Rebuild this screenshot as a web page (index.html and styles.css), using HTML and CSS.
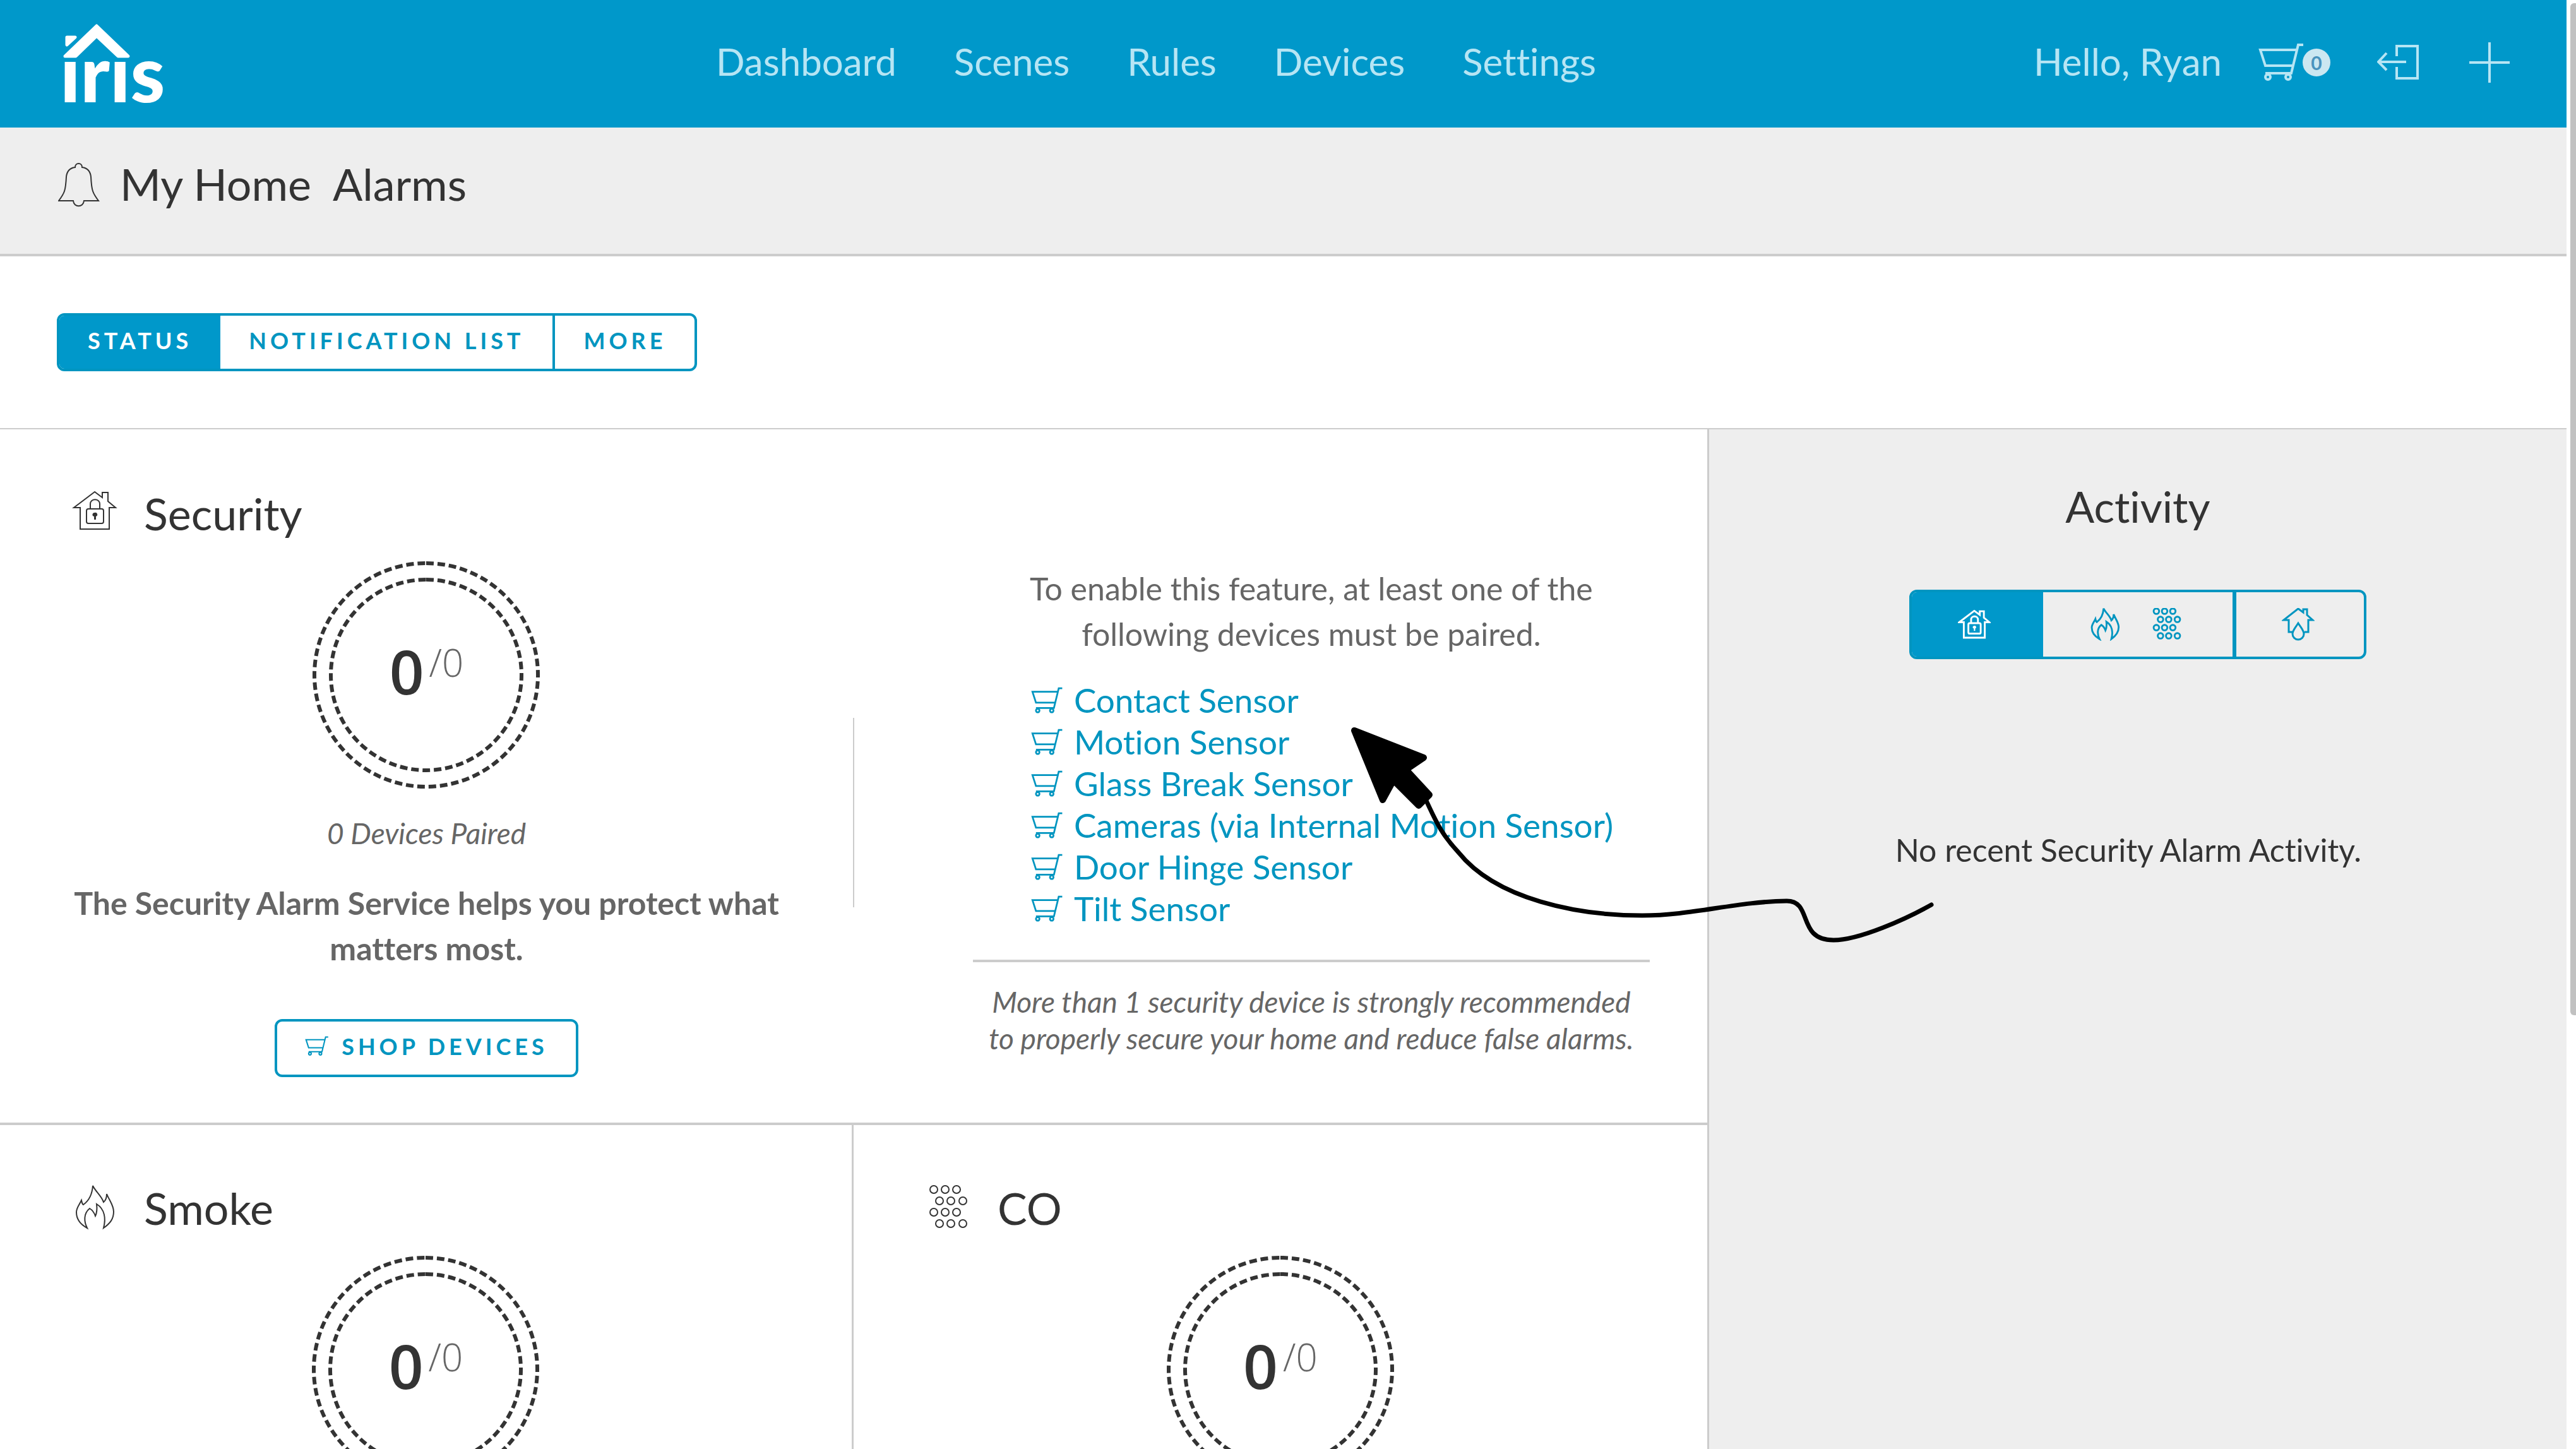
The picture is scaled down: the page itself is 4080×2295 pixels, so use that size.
FILE: index.html
```html
<!DOCTYPE html>
<html lang="en">
<head>
<meta charset="utf-8">
<title>Iris - My Home Alarms</title>
<link rel="stylesheet" href="styles.css">
</head>
<body>
<svg class="defs" aria-hidden="true">
  <symbol id="cart" viewBox="-2 0 73 62">
    <path d="M69 3H61L50 48H9M58 11H1L9 36H52"/>
    <circle cx="13" cy="54" r="4"/><circle cx="45" cy="54" r="4"/>
  </symbol>
  <symbol id="house-lock" viewBox="-2 -1 72 72">
    <path d="M34 1L1 26H11V60H57V26H67L55 16V2H46V10Z"/>
    <rect x="21" y="28" width="27" height="23" rx="3"/>
    <path d="M27 28V20C27 11 42 11 42 20V28"/>
    <path class="solid" d="M34 34A3 3 0 0 1 36 40V45H33V40A3 3 0 0 1 34 34Z"/>
  </symbol>
  <symbol id="flame" viewBox="-6 0 72 72">
    <path d="M27 1C31 10 41 17 44 27C48 24 49 19 49 14C53 24 60 32 60 42C60 54 54 61 44 68C48 53 46 38 33 30C34 38 34 43 31 49C29 43 27 40 22 37C12 45 13 58 18 68C7 62 1 54 1 43C1 36 6 31 9 24C10 28 10 30 12 31C22 24 26 14 27 1Z"/>
  </symbol>
  <symbol id="dots" viewBox="-5 0 72 72">
    <circle cx="8" cy="7" r="6"/><circle cx="26" cy="7" r="6"/><circle cx="44" cy="7" r="6"/>
    <circle cx="17" cy="25" r="6"/><circle cx="35" cy="25" r="6"/><circle cx="54" cy="25" r="6"/>
    <circle cx="8" cy="43" r="6"/><circle cx="26" cy="43" r="6"/><circle cx="44" cy="43" r="6"/>
    <circle cx="17" cy="61" r="6"/><circle cx="35" cy="61" r="6"/><circle cx="54" cy="61" r="6"/>
  </symbol>
  <symbol id="house-drop" viewBox="-1 0 52 52">
    <path d="M16 38H10V19H2L25 1L33 7V2H39V11L48 19H41V38H35M25 24C20 32 16 36 16 41A9 9 0 0 0 34 41C34 36 30 32 25 24Z"/>
  </symbol>
  <symbol id="rings" viewBox="0 0 360 360">
    <g transform="rotate(-90 180 180)" stroke-dasharray="12 6">
      <circle cx="180" cy="180" r="177"/><circle cx="180" cy="180" r="151"/>
    </g>
  </symbol>
</svg>

<div class="window">
  <div class="page">
    <header class="topbar">
      <a class="brand" href="#" aria-label="Iris home">
        <svg class="logo" viewBox="0 0 168 130">
          <path d="M53 7L103 55H87L53 23L20 55H3Z"/>
          <path d="M6 25H19L6 37Z"/>
          <text x="-5" y="128">ırıs</text>
        </svg>
      </a>
      <nav class="nav">
        <a href="#">Dashboard</a>
        <a href="#">Scenes</a>
        <a href="#">Rules</a>
        <a href="#">Devices</a>
        <a href="#">Settings</a>
      </nav>
      <div class="account">
        <span class="hello">Hello, Ryan</span>
        <a class="cart-link" href="#" aria-label="Cart"><svg class="icon cart-top"><use href="#cart"/></svg><span class="badge">0</span></a>
        <a class="logout" href="#" aria-label="Log out"><svg class="icon" viewBox="0 0 66 56"><path d="M31 18V2H64V53H31V35M46 27H2M15 13L2 27L15 40"/></svg></a>
        <a class="add" href="#" aria-label="Add"><svg class="icon" viewBox="0 0 64 64"><path d="M32 0V64M0 32H64"/></svg></a>
      </div>
    </header>

    <div class="titlebar">
      <svg class="icon bell" viewBox="0 0 66 70"><path d="M27 7C27 -1 38 -1 38 7C46 8 51 13 52 22C53 44 55 48 64 60H41C40 71 25 71 24 60H1C10 48 12 44 13 22C14 13 19 8 27 7Z"/></svg>
      <h1><span>My Home</span><span>Alarms</span></h1>
    </div>

    <div class="tabs-row">
      <div class="tabs">
        <button class="tab active" type="button">STATUS</button>
        <button class="tab" type="button">NOTIFICATION LIST</button>
        <button class="tab" type="button">MORE</button>
      </div>
    </div>

    <div class="content">
      <main class="alarms">
        <section class="security">
          <div class="summary">
            <h2 class="card-title"><svg class="icon"><use href="#house-lock"/></svg>Security</h2>
            <div class="gauge"><svg class="rings"><use href="#rings"/></svg><span class="count">0</span><span class="total">/0</span></div>
            <p class="paired">0 Devices Paired</p>
            <p class="pitch">The Security Alarm Service helps you protect what matters most.</p>
            <button class="shop" type="button"><svg class="icon"><use href="#cart"/></svg>SHOP DEVICES</button>
          </div>
          <div class="divider"></div>
          <div class="required">
            <p class="intro">To enable this feature, at least one of the following devices must be paired.</p>
            <ul class="devices">
              <li><a href="#"><svg class="icon"><use href="#cart"/></svg>Contact Sensor</a></li>
              <li><a href="#"><svg class="icon"><use href="#cart"/></svg>Motion Sensor</a></li>
              <li><a href="#"><svg class="icon"><use href="#cart"/></svg>Glass Break Sensor</a></li>
              <li><a href="#"><svg class="icon"><use href="#cart"/></svg>Cameras (via Internal Motion Sensor)</a></li>
              <li><a href="#"><svg class="icon"><use href="#cart"/></svg>Door Hinge Sensor</a></li>
              <li><a href="#"><svg class="icon"><use href="#cart"/></svg>Tilt Sensor</a></li>
            </ul>
            <p class="note">More than 1 security device is strongly recommended<br>to properly secure your home and reduce false alarms.</p>
          </div>
        </section>
        <div class="cards">
          <section class="card">
            <h2 class="card-title"><svg class="icon"><use href="#flame"/></svg>Smoke</h2>
            <div class="gauge"><svg class="rings"><use href="#rings"/></svg><span class="count">0</span><span class="total">/0</span></div>
          </section>
          <section class="card">
            <h2 class="card-title"><svg class="icon"><use href="#dots"/></svg>CO</h2>
            <div class="gauge"><svg class="rings"><use href="#rings"/></svg><span class="count">0</span><span class="total">/0</span></div>
          </section>
        </div>
      </main>
      <aside class="activity">
        <h2>Activity</h2>
        <div class="filter">
          <button class="filter-security active" type="button" aria-label="Security"><svg class="icon"><use href="#house-lock"/></svg></button>
          <button class="filter-smoke" type="button" aria-label="Smoke and CO"><svg class="icon"><use href="#flame"/></svg><svg class="icon"><use href="#dots"/></svg></button>
          <button class="filter-water" type="button" aria-label="Water"><svg class="icon thin"><use href="#house-drop"/></svg></button>
        </div>
        <p>No recent Security Alarm Activity.</p>
      </aside>
      <svg class="callout" viewBox="2136 1148 930 350" aria-hidden="true">
        <path class="callout-line" d="M2256 1262C2273 1297 2280 1318 2310 1350C2370 1425 2500 1450 2601 1450C2680 1450 2750 1428 2830 1427C2872 1427 2845 1489 2904 1489C2945 1489 3020 1455 3059 1433"/>
        <path class="callout-head" d="M2145 1157L2255 1200L2227 1219L2264 1259L2247 1276L2207 1236L2190 1267Z"/>
      </svg>
    </div>
  </div>
  <div class="scroll"><div class="thumb"></div></div>
</div>
</body>
</html>
```
FILE: styles.css
```css
:root {
  --blue: #0098ca;
  --blue-line: #0095c0;
  --pale: #b6e5f4;
  --ink: #333;
  --muted: #666;
  --rule: #ccc;
  --grey: #eee;
}

* { box-sizing: border-box; }

body {
  margin: 0;
  font-family: Lato, "Open Sans", sans-serif;
  font-variant-ligatures: none;
  color: var(--ink);
  background: #fff;
}

h1, h2, p, ul { margin: 0; padding: 0; font-weight: 400; }
ul { list-style: none; }
a { color: inherit; text-decoration: none; }
button { font: inherit; color: inherit; background: none; border: 0; padding: 0; }

.defs { display: none; }
.icon { flex: none; fill: none; stroke: currentColor; stroke-width: 2px; }
.solid { fill: currentColor; stroke: none; }

.window { display: flex; height: 100vh; overflow: hidden; }
.page { flex: 1; min-width: 0; display: flex; flex-direction: column; }
.scroll { width: 15px; padding: 5px 0 0 6px; }
.thumb { height: 70%; background: #c1c1c1; border-radius: 6px 0 0 6px; }

/* top bar */
.topbar {
  flex: none;
  display: flex;
  align-items: center;
  height: 202px;
  padding: 0 90px 5px 100px;
  background: var(--blue);
  color: var(--pale);
  font-size: 60px;
}
.brand { flex: 0 0 1034px; height: 130px; }
.logo {
  display: block;
  width: 168px;
  height: 130px;
  overflow: visible;
  fill: #fff;
}
.logo path { stroke: #fff; stroke-width: 5px; stroke-linejoin: round; }
.logo text { font: 900 124px Lato, sans-serif; }
.nav { display: flex; gap: 91px; padding-bottom: 4px; }
.account { display: flex; align-items: center; margin-left: auto; }
.hello { padding-bottom: 4px; }
.account .icon { display: block; stroke-width: 4px; }
.cart-link { display: flex; align-items: center; margin-left: 58px; }
.cart-top { width: 73px; height: 62px; }
.badge {
  width: 44px;
  height: 44px;
  margin-left: -3px;
  border-radius: 50%;
  background: #cbe7f1;
  color: #4a93bd;
  font-size: 30px;
  font-weight: 700;
  line-height: 44px;
  text-align: center;
}
.logout { margin-left: 74px; }
.logout .icon { width: 66px; height: 56px; }
.add { margin-left: 80px; }
.add .icon { width: 64px; height: 64px; }

/* page title */
.titlebar {
  flex: none;
  display: flex;
  align-items: center;
  gap: 32px;
  height: 204px;
  padding: 0 92px 18px;
  background: var(--grey);
  border-bottom: 4px solid var(--rule);
}
.bell { width: 66px; height: 70px; }
h1 { display: flex; gap: 34px; padding-bottom: 4px; font-size: 70px; }

/* tabs */
.tabs-row { flex: none; padding: 90px; border-bottom: 2px solid var(--rule); }
.tabs {
  display: inline-flex;
  vertical-align: top;
  height: 92px;
  border: 4px solid var(--blue-line);
  border-radius: 12px;
  overflow: hidden;
}
.tab, .shop {
  color: var(--blue-line);
  font-size: 36px;
  font-weight: 700;
  letter-spacing: 6px;
}
.tab { padding: 0 45px 6px; }
.tab + .tab + .tab { border-left: 4px solid var(--blue-line); }
.tab.active, .filter .active { background: var(--blue); color: #fff; }

/* main area */
.content {
  position: relative;
  flex: 1;
  min-height: 0;
  display: grid;
  grid-template-columns: minmax(0, 1.993fr) minmax(0, 1fr);
}
.alarms { border-right: 3px solid var(--rule); }
.security {
  display: grid;
  grid-template-columns: 1fr 2px 1fr;
  padding-bottom: 72px;
  border-bottom: 4px solid var(--rule);
}
.summary { display: flex; flex-direction: column; padding-top: 91px; }
.card-title {
  display: flex;
  align-items: center;
  gap: 42px;
  padding-left: 114px;
  font-size: 70px;
  line-height: 84px;
}
.card-title .icon { width: 72px; height: 72px; }
.gauge {
  position: relative;
  display: flex;
  justify-content: center;
  gap: 8px;
  width: 360px;
  height: 360px;
  margin: 34px auto 0;
  padding-top: 116px;
  font-family: "Open Sans", sans-serif;
}
.rings {
  position: absolute;
  inset: 0;
  width: 360px;
  height: 360px;
  fill: none;
  stroke: var(--ink);
  stroke-width: 6px;
}
.count { font-size: 96px; font-weight: 600; line-height: 116px; }
.total { color: var(--muted); font-size: 60px; font-weight: 300; line-height: 88px; }
.paired {
  margin-top: 41px;
  color: var(--muted);
  font-size: 46px;
  font-style: italic;
  line-height: 60px;
  text-align: center;
}
.pitch {
  margin-top: 44px;
  padding: 0 96px;
  color: var(--muted);
  font-size: 50px;
  font-weight: 700;
  line-height: 72px;
  text-align: center;
}
.shop {
  align-self: center;
  display: flex;
  align-items: center;
  gap: 20px;
  height: 92px;
  margin-top: 76px;
  padding: 0 44px 6px;
  border: 4px solid var(--blue-line);
  border-radius: 12px;
}
.shop .icon { width: 38px; height: 32px; stroke-width: 4px; }
.divider { height: 300px; margin-top: 457px; background: var(--rule); }
.required { padding: 216px 91px 0 188px; color: var(--muted); }
.intro { padding: 0 60px; font-size: 50px; line-height: 72px; text-align: center; }
.devices {
  margin-top: 36px;
  padding: 0 0 48px 92px;
  border-bottom: 4px solid var(--rule);
  color: var(--blue-line);
  font-size: 53px;
  line-height: 66px;
  white-space: nowrap;
}
.devices a { display: flex; align-items: center; gap: 17px; }
.devices .icon { width: 51px; height: 43px; stroke-width: 4px; }
.note {
  margin-top: 34px;
  font-size: 46px;
  font-style: italic;
  line-height: 58px;
  text-align: center;
  white-space: nowrap;
}

.cards { display: grid; grid-template-columns: 1fr 1fr; }
.card { height: 620px; padding-top: 89px; }
.card:first-child { border-right: 3px solid var(--rule); }

/* activity column */
.activity { padding-top: 80px; background: var(--grey); text-align: center; }
.activity h2 { font-size: 68px; line-height: 84px; }
.filter {
  display: inline-flex;
  vertical-align: top;
  height: 110px;
  margin-top: 90px;
  border: 4px solid var(--blue-line);
  border-radius: 12px;
  overflow: hidden;
  color: var(--blue-line);
}
.filter button { display: flex; align-items: center; justify-content: center; gap: 46px; padding-right: 6px; }
.filter .icon { width: 52px; height: 52px; stroke-width: 4px; }
.filter .thin { stroke-width: 3px; }
.filter .filter-security { width: 208px; padding: 6px 10px 0 0; }
.filter .filter-smoke { width: 306px; border-right: 6px solid var(--blue-line); }
.filter .filter-water { width: 202px; }
.activity p { margin-top: 266px; padding-right: 30px; font-size: 50px; line-height: 72px; }

/* hand-drawn arrow laid over the page */
.callout { position: absolute; left: 2136px; top: 468px; width: 930px; height: 350px; }
.callout-line { fill: none; stroke: #000; stroke-width: 7px; stroke-linecap: round; }
.callout-head { fill: #000; stroke: #000; stroke-width: 10px; stroke-linejoin: round; }
```
